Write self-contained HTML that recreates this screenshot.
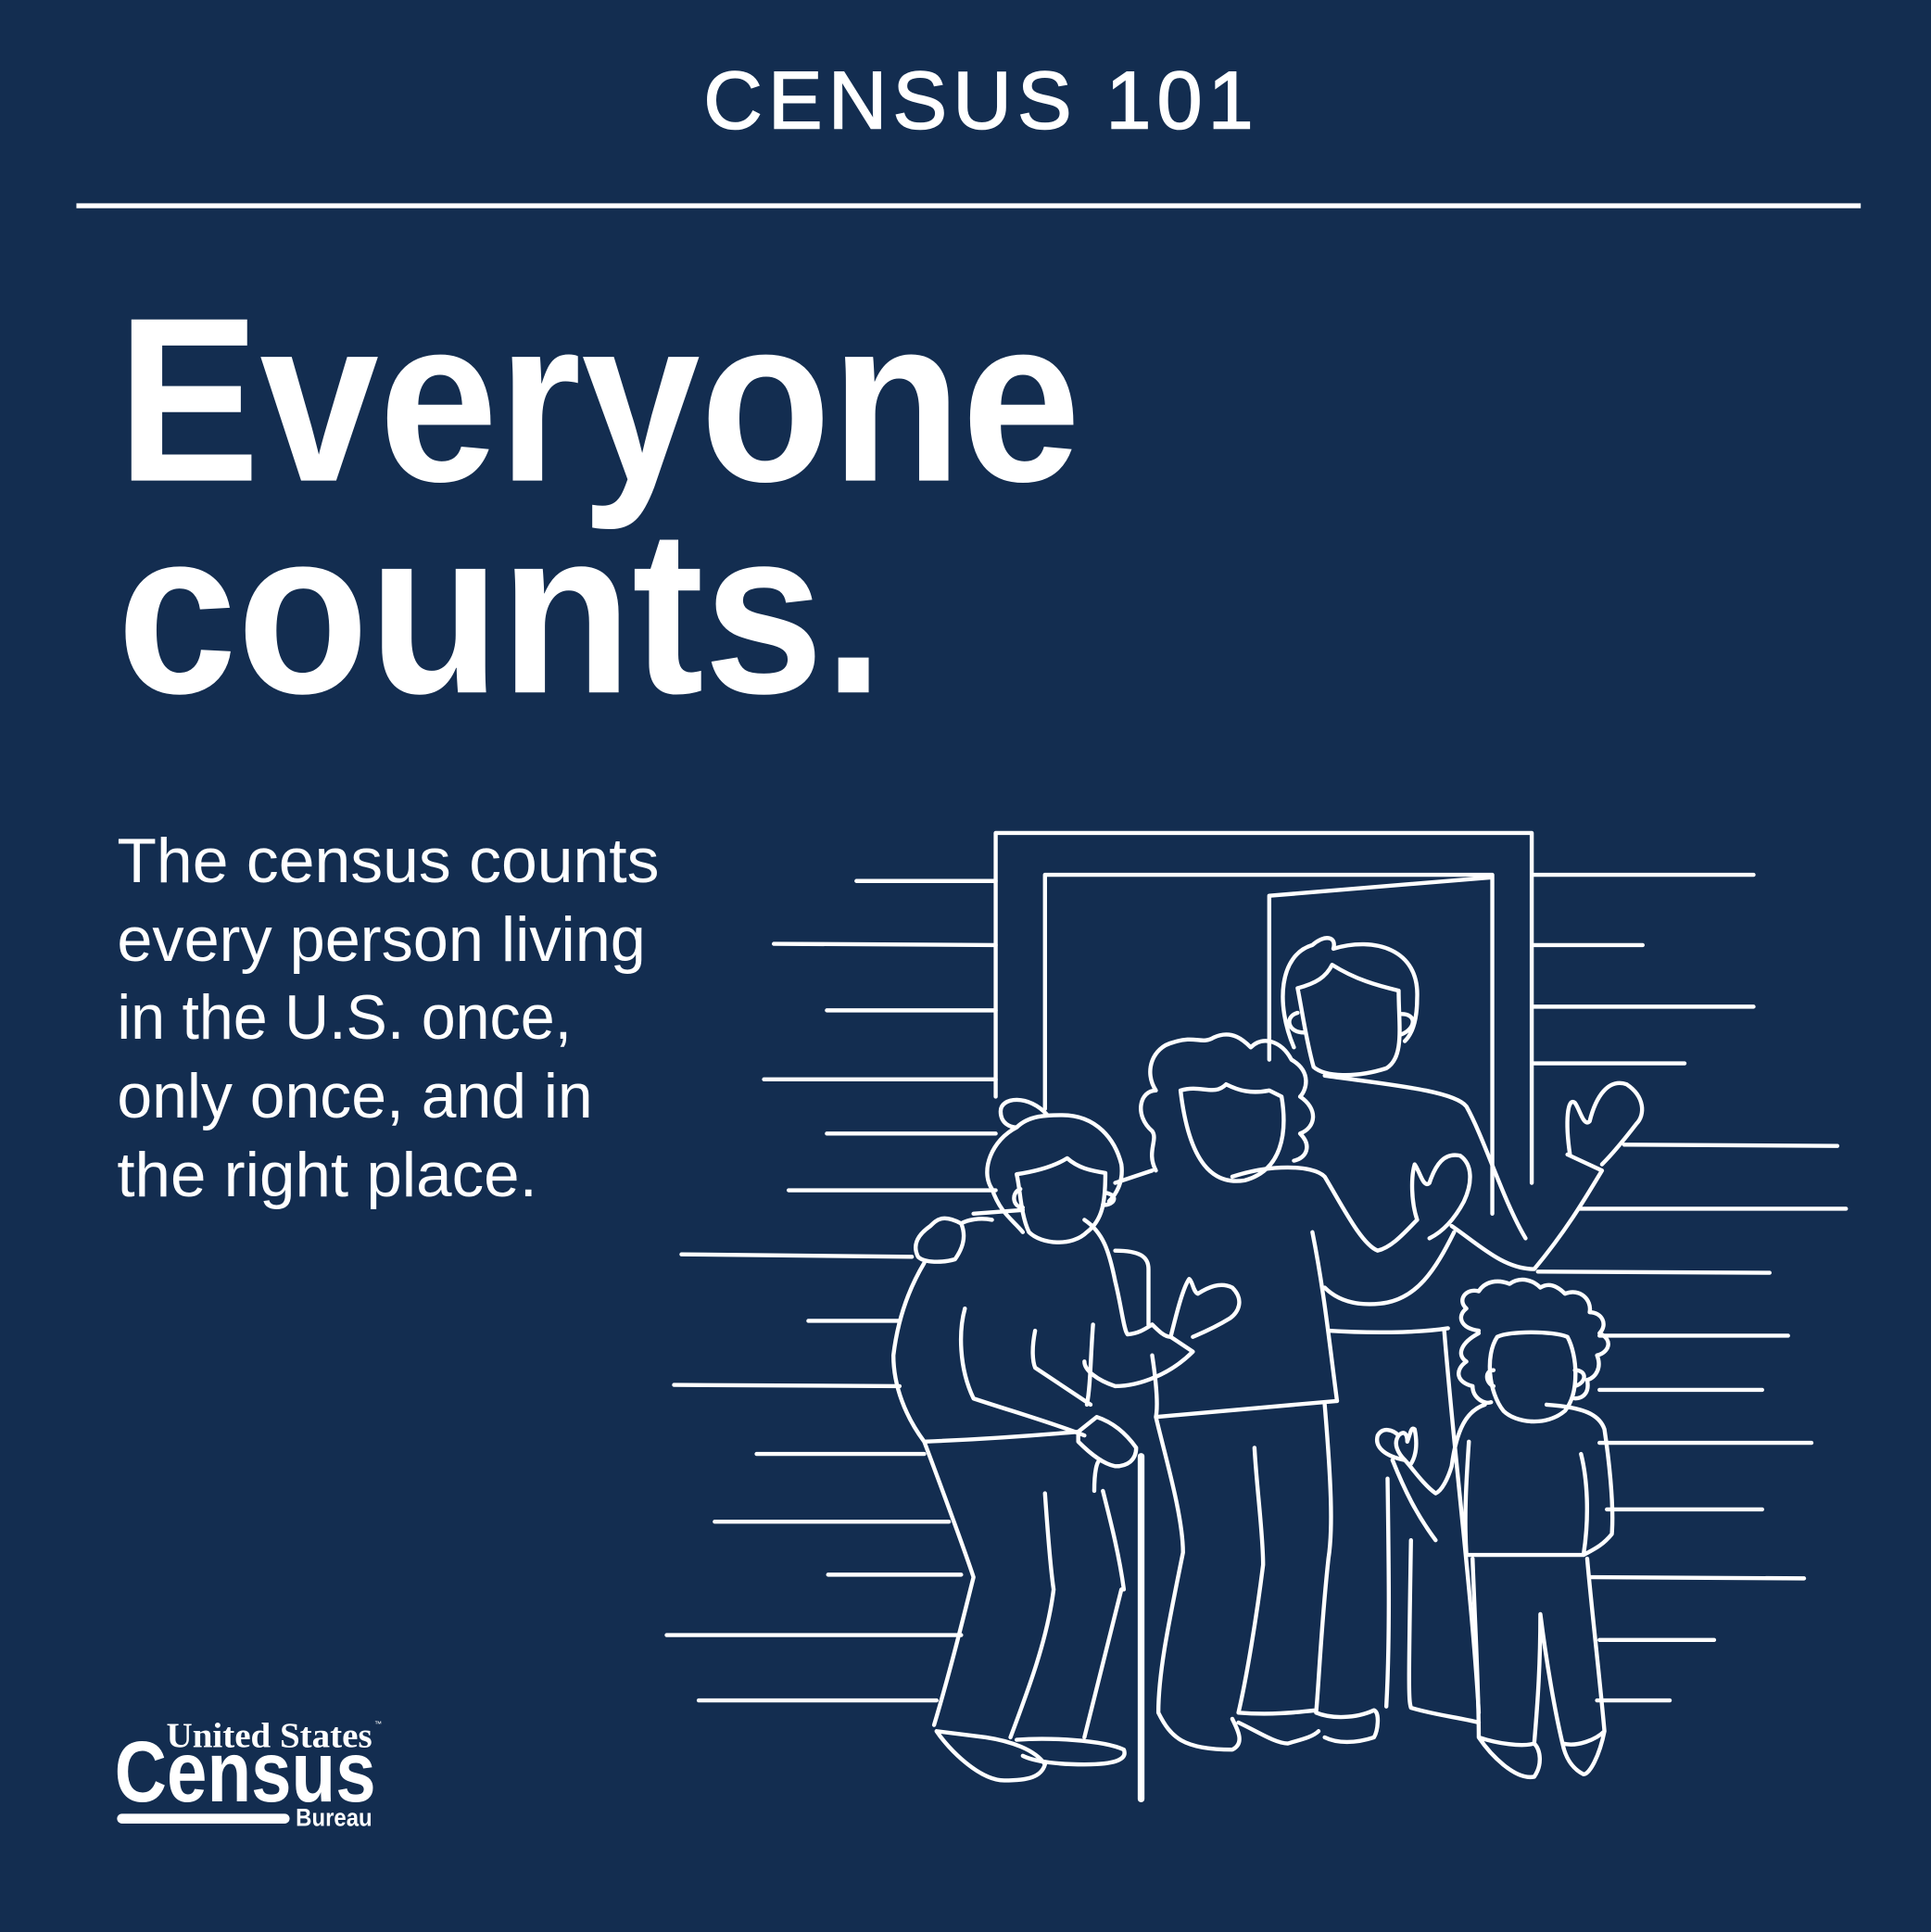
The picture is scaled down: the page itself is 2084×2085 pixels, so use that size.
<!DOCTYPE html>
<html><head><meta charset="utf-8"><style>
html,body{margin:0;padding:0;background:#132d50;}
svg{display:block;width:2084px;height:2085px;}
</style></head><body>
<svg viewBox="0 0 1567 1568" preserveAspectRatio="none" xmlns="http://www.w3.org/2000/svg">
<rect width="1567" height="1568" fill="#132d50"/>
<g font-family="Liberation Sans, sans-serif" fill="#fff">
<text x="571" y="104" font-size="66" textLength="446" lengthAdjust="spacing" stroke="#fff" stroke-width="1.2">CENSUS 101</text>
<text x="95" y="390" font-size="190" font-weight="bold" textLength="782" lengthAdjust="spacingAndGlyphs">Everyone</text>
<text x="95" y="562" font-size="190" font-weight="bold" textLength="622" lengthAdjust="spacingAndGlyphs">counts.</text>
<g font-size="51">
<text x="95" y="716" textLength="440" lengthAdjust="spacingAndGlyphs">The census counts</text>
<text x="95" y="780" textLength="429" lengthAdjust="spacingAndGlyphs">every person living</text>
<text x="95" y="843" textLength="369" lengthAdjust="spacingAndGlyphs">in the U.S. once,</text>
<text x="95" y="907" textLength="386" lengthAdjust="spacingAndGlyphs">only once, and in</text>
<text x="95" y="971" textLength="341" lengthAdjust="spacingAndGlyphs">the right place.</text>
</g>
<text x="135" y="1418" font-size="29" font-weight="bold" font-family="Liberation Serif, serif" textLength="167" lengthAdjust="spacingAndGlyphs">United States</text>
<text x="304" y="1401" font-size="6">™</text>
<text x="93" y="1462" font-size="70" font-weight="bold" textLength="212" lengthAdjust="spacingAndGlyphs">Census</text>
<rect x="95" y="1472" width="140" height="8" rx="4"/>
<text x="240" y="1482" font-size="20" font-weight="bold" textLength="62" lengthAdjust="spacingAndGlyphs">Bureau</text>
</g>
<rect x="62" y="165" width="1448" height="4" fill="#fff"/>
<g stroke="#fff" stroke-width="3.3" fill="none" stroke-linejoin="round" stroke-linecap="round">
<path d="M695,715H808 M628,766L808,767 M671,820H808 M620,876H808 M671,920H808 M640,966H808 M553,1018L740,1020 M656,1072H730 M547,1124L730,1125 M614,1180H750 M580,1235H770 M672,1278H780 M541,1327H780 M567,1380H760"/>
<path d="M1244,710H1423 M1244,767H1333 M1244,817H1423 M1244,863H1367 M1318,929L1491,930 M1282,981H1498 M1248,1032L1436,1033 M1298,1084H1451 M1298,1128H1430 M1298,1171H1470 M1304,1225H1430 M1290,1280L1464,1281 M1298,1331H1391 M1296,1380H1355"/>
<path d="M808,890V676H1243V960 M848,900V710H1211V985 M1030,860V727L1211,712"/>
<path d="M1050,850C1035,815 1038,775 1065,767C1075,758 1085,760 1082,770C1115,760 1152,770 1150,810C1150,830 1145,840 1140,845"/>
<path d="M1053,802C1068,798 1076,793 1081,783C1100,795 1118,800 1135,804C1135,832 1140,858 1125,867C1100,875 1075,874 1066,866C1060,845 1057,822 1053,802Z"/>
<path d="M1053,822C1042,825 1045,838 1058,838 M1136,823C1150,822 1150,835 1136,840"/>
<path d="M1075,873C1125,880 1180,885 1190,898C1205,925 1220,975 1238,1005"/>
<path d="M1178,995C1200,1010 1220,1030 1245,1030C1270,1000 1285,975 1300,950 M1272,937L1300,950"/>
<path d="M1274,937C1270,910 1272,890 1278,895C1282,900 1285,915 1290,910C1295,890 1305,875 1320,880C1335,890 1335,905 1328,912C1318,925 1310,935 1300,945"/>
<path d="M1078,1080C1110,1082 1150,1082 1175,1078 M1172,1080C1180,1180 1195,1300 1200,1390 M1126,1200C1127,1270 1128,1330 1125,1385 M1145,1386C1165,1392 1185,1394 1200,1398 M1145,1386C1143,1380 1143,1370 1145,1250"/>
<path d="M938,950C930,935 940,925 935,918C920,905 925,885 938,885C928,870 935,850 952,846C970,840 975,848 985,842C1000,835 1010,845 1015,850C1025,840 1040,845 1048,860C1065,870 1060,885 1055,890C1070,900 1068,915 1055,920C1065,930 1060,940 1050,942"/>
<path d="M958,885C975,880 985,890 995,880C1005,885 1015,888 1030,885L1040,890C1045,920 1040,950 1010,958C985,962 965,945 958,885Z"/>
<path d="M1000,955C1030,945 1065,945 1075,955C1090,980 1105,1010 1118,1015C1130,1012 1140,1000 1150,990"/>
<path d="M1150,990C1145,975 1145,955 1148,945C1152,950 1155,965 1160,960C1165,945 1172,935 1185,938C1195,945 1195,960 1188,975C1180,990 1170,1000 1160,1005"/>
<path d="M1180,1000C1165,1030 1150,1055 1120,1058C1100,1060 1085,1055 1075,1045 M1065,1000C1075,1050 1080,1100 1085,1137"/>
<path d="M938,1150L1085,1137 M935,1100C938,1120 940,1140 938,1150C945,1180 960,1230 960,1260C950,1310 940,1355 940,1390C950,1410 960,1420 1000,1420C1010,1415 1005,1405 1000,1395 M1075,1140C1080,1200 1082,1240 1078,1265C1072,1320 1070,1370 1068,1390C1080,1395 1100,1395 1115,1388C1120,1390 1118,1405 1115,1410C1100,1415 1085,1415 1075,1410 M1018,1175C1020,1210 1025,1245 1025,1270C1020,1310 1012,1360 1005,1390C1030,1392 1050,1390 1068,1388 M1005,1398C1020,1405 1035,1415 1045,1415C1055,1412 1065,1410 1070,1405"/>
<path d="M850,905C835,888 812,890 812,902C812,912 820,915 825,915C805,925 795,950 805,965C812,985 822,990 830,1000 M825,915C835,905 850,905 862,905C890,905 905,925 910,945C912,960 905,970 900,975"/>
<path d="M825,953C845,950 858,945 866,940C875,948 885,950 897,952C897,975 895,990 882,1000C870,1012 845,1010 835,1000C828,985 828,965 825,953Z"/>
<path d="M828,965C820,968 822,980 830,980 M897,968C908,970 905,978 895,978"/>
<path d="M905,960L935,950 M805,990C795,988 785,990 780,993C765,985 760,990 755,995C745,1002 740,1010 745,1020C750,1025 765,1025 775,1022C780,1015 785,1005 780,993"/>
<path d="M790,985L830,982 M880,990C895,1000 900,1015 905,1040C910,1060 912,1080 915,1083C925,1082 930,1078 935,1075"/>
<path d="M750,1025C735,1050 728,1075 725,1100C725,1125 735,1150 750,1170C800,1168 840,1165 875,1162 M750,1170C765,1210 780,1250 790,1280C780,1320 770,1360 758,1400"/>
<path d="M905,1015C925,1015 932,1020 932,1030V1075 M935,1075C940,1080 945,1085 950,1085L968,1097C950,1115 925,1125 905,1125C890,1120 880,1112 880,1105"/>
<path d="M950,1085C955,1065 960,1045 965,1038C968,1040 968,1048 972,1050C980,1045 990,1040 1000,1045C1010,1055 1005,1065 998,1070C985,1078 975,1082 968,1085"/>
<path d="M783,1062C778,1080 778,1110 790,1135C820,1145 855,1155 880,1165 M840,1080C837,1095 838,1105 840,1110C855,1120 870,1130 885,1140 M887,1075C885,1100 885,1125 882,1140"/>
<path d="M875,1162L890,1150C905,1155 915,1165 922,1175C922,1185 915,1190 905,1190C895,1188 885,1180 875,1170Z"/>
<path d="M888,1210C888,1195 890,1185 893,1185M848,1212C850,1240 852,1270 855,1290C850,1330 835,1370 820,1410M910,1290C900,1330 890,1370 880,1410M895,1210C900,1230 908,1260 912,1290"/>
<path d="M760,1405C770,1420 795,1445 815,1445C835,1445 845,1442 848,1432C840,1420 820,1413 800,1410ZM825,1412C850,1410 895,1412 912,1420C915,1428 905,1432 880,1432C860,1432 840,1430 830,1425"/>
<path d="M926,1182V1460" stroke-width="5.5"/>
<path d="M1200,1080C1185,1078 1182,1068 1190,1062C1182,1055 1190,1045 1200,1048C1205,1040 1215,1038 1225,1042C1235,1035 1245,1040 1250,1045C1258,1040 1265,1045 1270,1050C1282,1045 1292,1055 1290,1065C1300,1065 1305,1075 1298,1082C1310,1088 1305,1098 1296,1100C1300,1110 1295,1118 1288,1120C1290,1130 1285,1135 1278,1135 M1200,1082C1185,1090 1182,1100 1190,1105C1180,1112 1182,1122 1195,1125C1195,1135 1205,1140 1210,1138"/>
<path d="M1215,1085C1225,1080 1260,1080 1272,1085C1280,1100 1282,1130 1270,1145C1255,1158 1230,1155 1220,1145C1208,1130 1205,1100 1215,1085Z"/>
<path d="M1212,1112C1205,1112 1205,1122 1212,1125 M1278,1112C1288,1112 1288,1122 1278,1125"/>
<path d="M1205,1140C1190,1145 1182,1160 1178,1190C1175,1200 1170,1210 1165,1212C1155,1205 1145,1190 1140,1185 M1255,1140C1285,1142 1298,1148 1302,1160C1305,1180 1310,1220 1308,1245C1300,1255 1292,1258 1285,1262 M1192,1170C1190,1200 1188,1230 1190,1262L1285,1262 M1283,1180C1288,1200 1290,1230 1285,1262"/>
<path d="M1140,1185C1135,1180 1130,1172 1135,1165C1140,1160 1142,1165 1142,1170C1145,1162 1145,1158 1148,1160C1150,1170 1150,1180 1145,1188M1140,1185C1125,1182 1115,1175 1118,1165C1122,1158 1130,1160 1135,1165 M1130,1185C1140,1210 1150,1230 1165,1250"/>
<path d="M1195,1265C1197,1320 1200,1370 1200,1410C1210,1425 1230,1445 1245,1442C1252,1432 1250,1420 1245,1415 M1288,1265C1292,1310 1298,1360 1302,1405C1298,1425 1290,1440 1285,1440C1275,1435 1270,1425 1268,1415 M1250,1310C1250,1350 1248,1380 1245,1415 M1250,1310C1255,1350 1262,1390 1268,1415 M1200,1410C1215,1415 1235,1418 1245,1415 M1268,1415C1280,1418 1295,1412 1302,1405"/>
</g>
</svg>
</body></html>
